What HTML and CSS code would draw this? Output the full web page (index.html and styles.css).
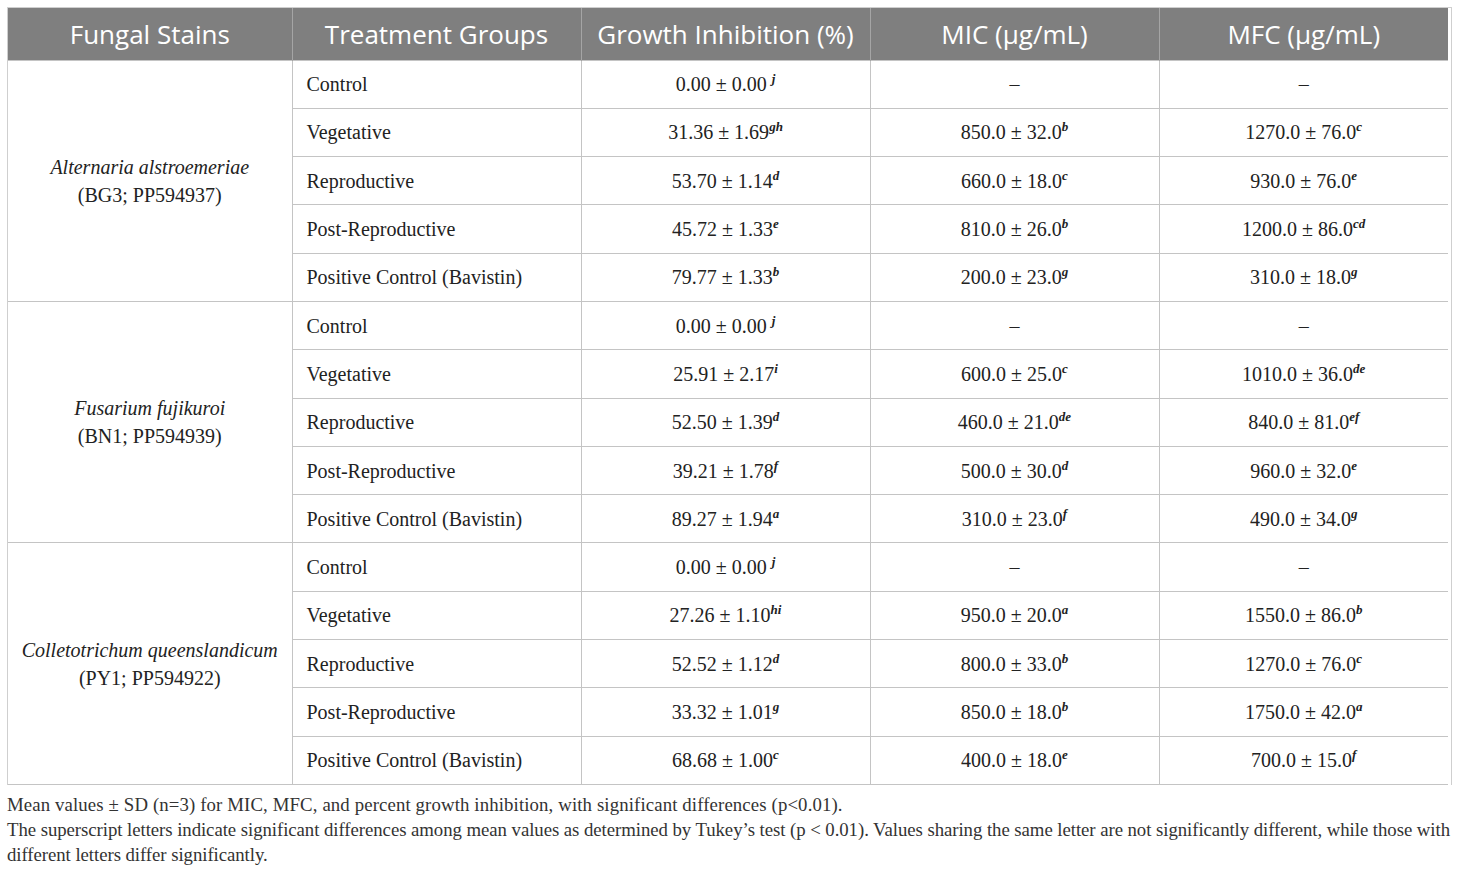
FILE: index.html
```html
<!DOCTYPE html>
<html>
<head>
<meta charset="utf-8">
<link rel="stylesheet" href="styles.css">
</head>
<body>
<div class="frame">
<table class="data">
<colgroup><col class="c1"><col class="c2"><col class="c3"><col class="c4"><col class="c5"></colgroup>
<thead>
<tr><th>Fungal Stains</th><th>Treatment Groups</th><th>Growth Inhibition (%)</th><th>MIC (µg/mL)</th><th>MFC (µg/mL)</th></tr>
</thead>
<tbody>
<tr><td class="sp" rowspan="5"><i>Alternaria alstroemeriae</i><br>(BG3; PP594937)</td><td class="tg">Control</td><td>0.00 ± 0.00 <sup>j</sup></td><td>–</td><td>–</td></tr>
<tr><td class="tg">Vegetative</td><td>31.36 ± 1.69<sup>gh</sup></td><td>850.0 ± 32.0<sup>b</sup></td><td>1270.0 ± 76.0<sup>c</sup></td></tr>
<tr><td class="tg">Reproductive</td><td>53.70 ± 1.14<sup>d</sup></td><td>660.0 ± 18.0<sup>c</sup></td><td>930.0 ± 76.0<sup>e</sup></td></tr>
<tr><td class="tg">Post-Reproductive</td><td>45.72 ± 1.33<sup>e</sup></td><td>810.0 ± 26.0<sup>b</sup></td><td>1200.0 ± 86.0<sup>cd</sup></td></tr>
<tr><td class="tg">Positive Control (Bavistin)</td><td>79.77 ± 1.33<sup>b</sup></td><td>200.0 ± 23.0<sup>g</sup></td><td>310.0 ± 18.0<sup>g</sup></td></tr>
<tr><td class="sp" rowspan="5"><i>Fusarium fujikuroi</i><br>(BN1; PP594939)</td><td class="tg">Control</td><td>0.00 ± 0.00 <sup>j</sup></td><td>–</td><td>–</td></tr>
<tr><td class="tg">Vegetative</td><td>25.91 ± 2.17<sup>i</sup></td><td>600.0 ± 25.0<sup>c</sup></td><td>1010.0 ± 36.0<sup>de</sup></td></tr>
<tr><td class="tg">Reproductive</td><td>52.50 ± 1.39<sup>d</sup></td><td>460.0 ± 21.0<sup>de</sup></td><td>840.0 ± 81.0<sup>ef</sup></td></tr>
<tr><td class="tg">Post-Reproductive</td><td>39.21 ± 1.78<sup>f</sup></td><td>500.0 ± 30.0<sup>d</sup></td><td>960.0 ± 32.0<sup>e</sup></td></tr>
<tr><td class="tg">Positive Control (Bavistin)</td><td>89.27 ± 1.94<sup>a</sup></td><td>310.0 ± 23.0<sup>f</sup></td><td>490.0 ± 34.0<sup>g</sup></td></tr>
<tr><td class="sp" rowspan="5"><i>Colletotrichum queenslandicum</i><br>(PY1; PP594922)</td><td class="tg">Control</td><td>0.00 ± 0.00 <sup>j</sup></td><td>–</td><td>–</td></tr>
<tr><td class="tg">Vegetative</td><td>27.26 ± 1.10<sup>hi</sup></td><td>950.0 ± 20.0<sup>a</sup></td><td>1550.0 ± 86.0<sup>b</sup></td></tr>
<tr><td class="tg">Reproductive</td><td>52.52 ± 1.12<sup>d</sup></td><td>800.0 ± 33.0<sup>b</sup></td><td>1270.0 ± 76.0<sup>c</sup></td></tr>
<tr><td class="tg">Post-Reproductive</td><td>33.32 ± 1.01<sup>g</sup></td><td>850.0 ± 18.0<sup>b</sup></td><td>1750.0 ± 42.0<sup>a</sup></td></tr>
<tr><td class="tg">Positive Control (Bavistin)</td><td>68.68 ± 1.00<sup>c</sup></td><td>400.0 ± 18.0<sup>e</sup></td><td>700.0 ± 15.0<sup>f</sup></td></tr>
</tbody>
</table>
</div>
<div class="notes">
<p class="n1">Mean values ± SD (n=3) for MIC, MFC, and percent growth inhibition, with significant differences (p&lt;0.01).</p>
<p class="n2">The superscript letters indicate significant differences among mean values as determined by Tukey’s test (p &lt; 0.01). Values sharing the same letter are not significantly different, while those with different letters differ significantly.</p>
</div>
</body>
</html>
```
FILE: styles.css
```css
html, body {
  margin: 0;
  padding: 0;
  background: #ffffff;
}
html { overflow-x: hidden; }
body {
  padding: 7px 0 0 7px;
  font-family: "Liberation Serif", "Times New Roman", serif;
  color: #222222;
}
.frame {
  width: 1440px;
  border: 1px solid #cfcfcf;
  border-bottom: none;
  padding-right: 3px;
}
.data {
  border-collapse: collapse;
  width: 1440px;
  table-layout: fixed;
}
.c1 { width: 284px; }
.c2, .c3, .c4, .c5 { width: 289px; }
.data th {
  background: #7f7f7f;
  color: #ffffff;
  font-family: "Open Sans", "Noto Sans", sans-serif;
  font-weight: 400;
  font-size: 26px;
  height: 52px;
  padding: 0;
  border-left: 1px solid #a5a5a5;
  text-align: center;
  vertical-align: middle;
  box-sizing: border-box;
}
.data th:first-child { border-left: none; }
.data td {
  border: 1px solid #c4c4c4;
  height: 48.3px;
  padding: 0;
  font-size: 20px;
  text-align: center;
  vertical-align: middle;
  box-sizing: border-box;
  line-height: 28px;
}
.data td:first-child { border-left: none; }
.data tr td:last-child { border-right: none; }
.data td.tg {
  text-align: left;
  padding-left: 14px;
}
.data td.sp {
  border-left: none;
}
.data sup {
  font-size: 13px;
  font-style: italic;
  font-weight: 700;
  line-height: 0;
  vertical-align: 8px;
}
.notes {
  padding: 7px 0 0 0;
  width: 1452px;
  font-size: 18.8px;
  line-height: 25px;
  color: #333333;
}
.notes p { margin: 0; }
.notes .n1 { letter-spacing: 0.12px; }
.notes .n2 { letter-spacing: -0.06px; }
```
